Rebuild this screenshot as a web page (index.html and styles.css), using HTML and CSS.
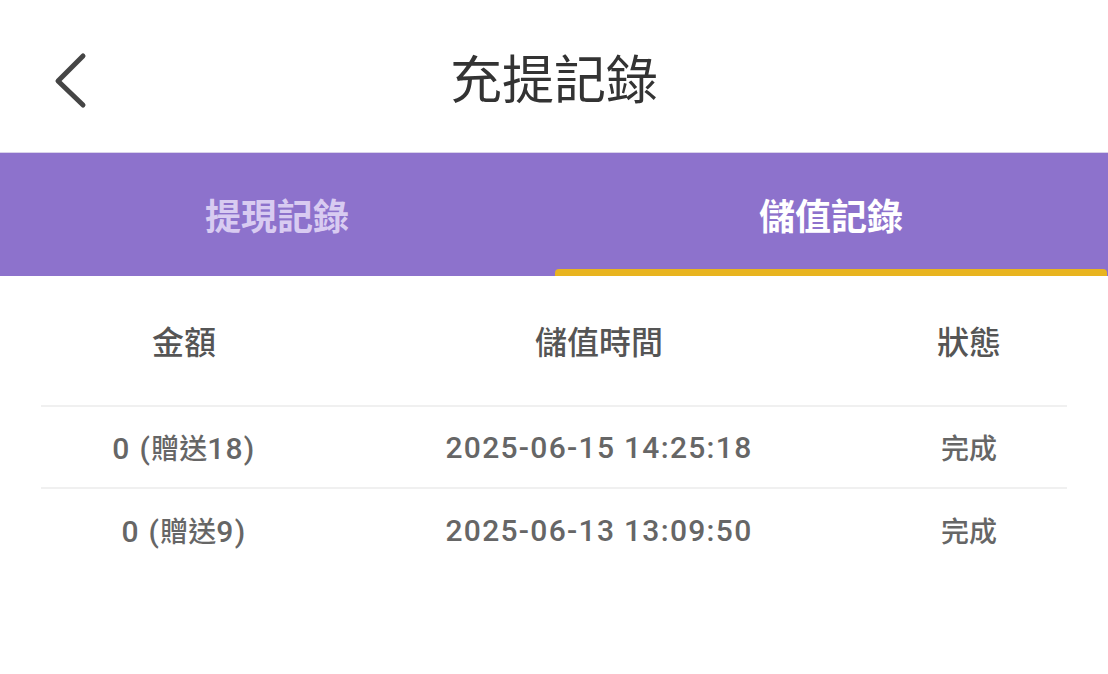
FILE: index.html
```html
<!DOCTYPE html>
<html lang="zh-Hant">
<head>
<meta charset="utf-8">
<link rel="stylesheet" href="styles.css">
</head>
<body>
<div class="page">
  <header class="topbar">
    <button class="back" aria-label="返回">
      <svg width="40" height="60" viewBox="0 0 40 60"><polyline points="31,7 6,32 31,56" fill="none" stroke="#454545" stroke-width="5" stroke-linecap="round" stroke-linejoin="round"/></svg>
    </button>
    <h1 class="title">充提記錄</h1>
  </header>
  <nav class="tabs">
    <div class="tab">提現記錄</div>
    <div class="tab active">儲值記錄</div>
  </nav>
  <section class="table">
    <div class="row head">
      <div class="cell">金額</div>
      <div class="cell">儲值時間</div>
      <div class="cell">狀態</div>
    </div>
    <div class="row">
      <div class="cell">0 (<span class="zh">贈送</span>18)</div>
      <div class="cell">2025-06-15 14:25:18</div>
      <div class="cell"><span class="zh">完成</span></div>
    </div>
    <div class="row last">
      <div class="cell">0 (<span class="zh">贈送</span>9)</div>
      <div class="cell">2025-06-13 13:09:50</div>
      <div class="cell"><span class="zh">完成</span></div>
    </div>
  </section>
</div>
</body>
</html>
```
FILE: styles.css
```css
* { box-sizing: border-box; }
html, body { margin: 0; padding: 0; background: #fff; }
body { font-family: "Noto Sans CJK TC", "Noto Sans", sans-serif; }
.page { width: 1108px; }
.topbar {
  position: relative;
  height: 153px;
  display: flex;
  align-items: center;
  justify-content: center;
  border-bottom: 1px solid #d9d2ea;
}
.back {
  position: absolute;
  left: 52px;
  top: 49px;
  padding: 0;
  border: 0;
  background: none;
  line-height: 0;
}
.title {
  margin: 0;
  font-size: 52px;
  font-weight: 400;
  color: #333;
  line-height: 1;
  padding-top: 2px;
}
.tabs {
  display: flex;
  height: 123px;
  background: #8d72cc;
}
.tab {
  flex: 1;
  display: flex;
  align-items: center;
  justify-content: center;
  font-size: 36px;
  font-weight: 700;
  color: #d8cbf1;
  padding-bottom: 2px;
  position: relative;
}
.tab.active { color: #fff; }
.tab.active::after {
  content: "";
  position: absolute;
  left: 1px;
  right: 1px;
  bottom: 0;
  height: 7px;
  border-radius: 4px 4px 0 0;
  background: #e8b41f;
}
.table {
  margin: 0 41px;
}
.row {
  display: grid;
  grid-template-columns: 286px 544px 196px;
  height: 82px;
  align-items: center;
  border-bottom: 2px solid #f0f0f0;
  font-family: "Roboto", "Noto Sans CJK TC", sans-serif;
  font-size: 30px;
  font-weight: 500;
  letter-spacing: 1.3px;
  color: #666;
}
.row .zh {
  font-family: "Noto Sans CJK TC", sans-serif;
  font-size: 28px;
  letter-spacing: 0;
}
.row.head {
  height: 131px;
  font-family: "Noto Sans CJK TC", sans-serif;
  font-size: 32px;
  font-weight: 500;
  letter-spacing: 0;
  color: #555;
  padding-bottom: 2px;
}
.row.last { border-bottom: 0; }
.cell { text-align: center; }
```
